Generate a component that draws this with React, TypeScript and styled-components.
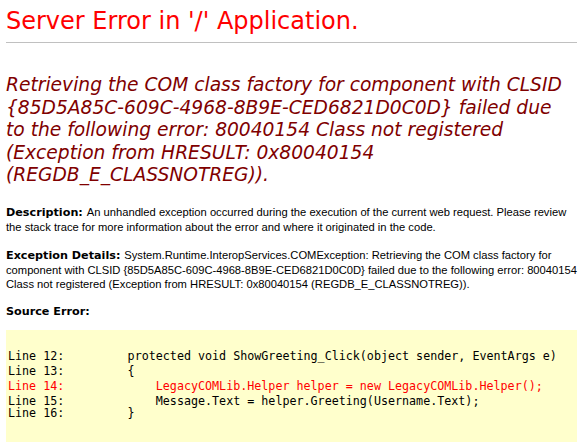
import React from "react";
import styled, { createGlobalStyle } from "styled-components";

const GlobalStyle = createGlobalStyle`
  html, body { margin: 0; padding: 0; background: #ffffff; }
  body { font-family: "Liberation Sans", Arial, sans-serif; color: #000000; }
`;

const Page = styled.div`
  padding: 0 5px 0 6px;
`;

const Title = styled.h1`
  margin: 7px 0 0 0;
  font-family: "DejaVu Sans", Verdana, sans-serif;
  font-weight: normal;
  font-size: 24px;
  line-height: 28px;
  color: #ff0000;
`;

const Rule = styled.hr`
  margin: 7px 0 0 0;
  border: 0;
  height: 1px;
  background: #c0c0c0;
`;

const Headline = styled.h2`
  margin: 31px 0 0 0;
  font-family: "DejaVu Sans", Verdana, sans-serif;
  font-weight: normal;
  font-style: italic;
  font-size: 18.67px;
  line-height: 22.5px;
  color: #800000;
  white-space: nowrap;
`;

const Para = styled.p<{ $gap: number }>`
  margin: ${(p) => p.$gap}px 0 0 0;
  font-family: "Liberation Sans", Arial, sans-serif;
  font-size: 11.2px;
  line-height: 14px;
  white-space: nowrap;
`;

const Label = styled.b`
  font-family: "DejaVu Sans", Verdana, sans-serif;
  font-weight: bold;
  color: #000000;
`;

const CodeBox = styled.div`
  margin-top: 11px;
  background: #ffffcc;
  padding: 19px 2px 21px 2px;
`;

const CodeLine = styled.div<{ $error?: boolean; $tight?: boolean }>`
  font-family: "DejaVu Sans Mono", "Liberation Mono", monospace;
  font-size: 11.7px;
  line-height: 15px;
  white-space: pre;
  color: ${(p) => (p.$error ? "#ff0000" : "#000000")};
  margin-top: ${(p) => (p.$tight ? "-2.5px" : "0")};
`;

const lines: { text: string; error?: boolean; tight?: boolean }[] = [
  { text: "Line 12:         protected void ShowGreeting_Click(object sender, EventArgs e)" },
  { text: "Line 13:         {" },
  { text: "Line 14:             LegacyCOMLib.Helper helper = new LegacyCOMLib.Helper();", error: true },
  { text: "Line 15:             Message.Text = helper.Greeting(Username.Text);" },
  { text: "Line 16:         }", tight: true },
];

export default function App() {
  return (
    <Page>
      <GlobalStyle />
      <Title>Server Error in '/' Application.</Title>
      <Rule />
      <Headline>
        Retrieving the COM class factory for component with CLSID
        <br />
        {"{85D5A85C-609C-4968-8B9E-CED6821D0C0D}"} failed due
        <br />
        to the following error: 80040154 Class not registered
        <br />
        (Exception from HRESULT: 0x80040154
        <br />
        (REGDB_E_CLASSNOTREG)).
      </Headline>
      <Para $gap={18}>
        <Label>Description: </Label>
        An unhandled exception occurred during the execution of the current web request. Please review
        <br />
        the stack trace for more information about the error and where it originated in the code.
      </Para>
      <Para $gap={14}>
        <Label>Exception Details: </Label>
        System.Runtime.InteropServices.COMException: Retrieving the COM class factory for
        <br />
        component with CLSID {"{85D5A85C-609C-4968-8B9E-CED6821D0C0D}"} failed due to the following error: 80040154
        <br />
        Class not registered (Exception from HRESULT: 0x80040154 (REGDB_E_CLASSNOTREG)).
      </Para>
      <Para $gap={13}>
        <Label>Source Error:</Label>
      </Para>
      <CodeBox>
        {lines.map((l) => (
          <CodeLine key={l.text} $error={l.error} $tight={l.tight}>
            {l.text}
          </CodeLine>
        ))}
      </CodeBox>
    </Page>
  );
}
